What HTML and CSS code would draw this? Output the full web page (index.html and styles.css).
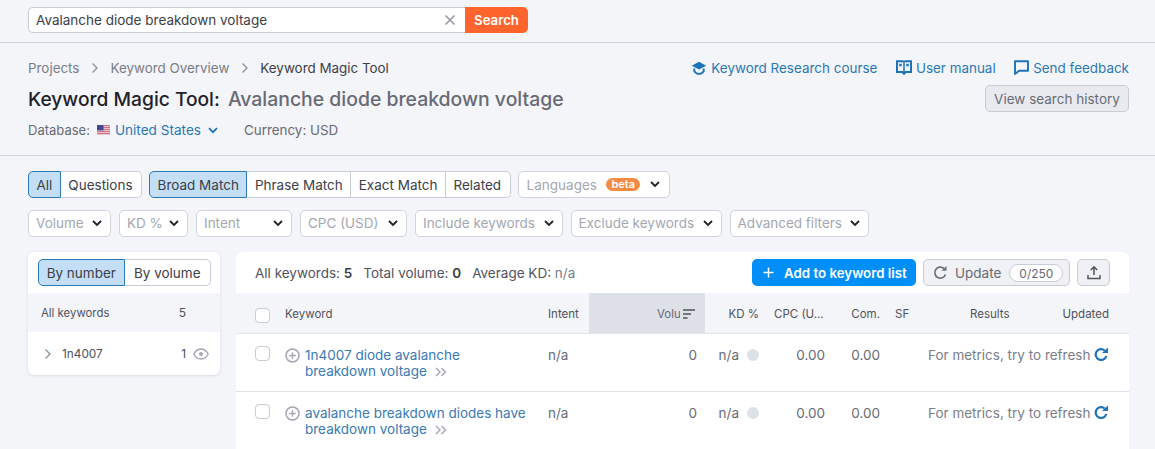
FILE: index.html
```html
<!DOCTYPE html>
<html lang="en">
<head>
<meta charset="UTF-8">
<meta name="viewport" content="width=device-width, initial-scale=1.0">
<title>Keyword Magic Tool</title>
<link rel="stylesheet" href="styles.css">
</head>
<body>

<div class="search-bar">
  <div class="search-input">
    <span class="search-text">Avalanche diode breakdown voltage</span>
    <svg class="clear-icon" width="12" height="12" viewBox="0 0 12 12"><path d="M1.5 1.5l9 9M10.5 1.5l-9 9" stroke="#9a9ca6" stroke-width="1.7" fill="none"/></svg>
  </div>
  <button class="search-button">Search</button>
</div>

<div class="page-head">
  <div class="head-left">
    <div class="breadcrumbs">
      <span>Projects</span>
      <svg class="crumb-sep" width="8" height="12" viewBox="0 0 8 12"><path d="M1.500 1.500L6 6l-4.500 4.500" stroke="#8b8e99" stroke-width="1.300" fill="none"/></svg>
      <span>Keyword Overview</span>
      <svg class="crumb-sep" width="8" height="12" viewBox="0 0 8 12"><path d="M1.500 1.500L6 6l-4.500 4.500" stroke="#8b8e99" stroke-width="1.300" fill="none"/></svg>
      <span class="crumb-current">Keyword Magic Tool</span>
    </div>
    <h1><span class="title-tool">Keyword Magic Tool:</span> <span class="title-query">Avalanche diode breakdown voltage</span></h1>
    <div class="db-line">
      <span>Database:</span>
      <svg class="flag" width="13" height="10" viewBox="0 0 13 10">
        <rect width="13" height="10" fill="#f3f3f6"/>
        <path d="M0 .7h13M0 2.700h13M0 4.700h13M0 6.700h13M0 8.700h13" stroke="#c8485a" stroke-width="1.100"/>
        <rect width="6.500" height="5.400" fill="#3f4a94"/>
      </svg>
      <a class="db-link" href="#">United States</a>
      <svg class="db-chevron" width="10" height="7" viewBox="0 0 10 7"><path d="M1 1.200l4 4 4-4" stroke="#1d72b8" stroke-width="1.700" fill="none"/></svg>
      <span class="currency">Currency: USD</span>
    </div>
  </div>
  <div class="head-right">
    <div class="head-links">
      <a href="#">
        <svg width="16" height="14" viewBox="0 0 16 14"><path d="M8 .8L.8 4.700 8 8.600l7.200-3.900z" fill="#1d72b8"/><path d="M3.300 7.500v2.700C4.500 12 6.200 12.900 8 12.900s3.500-.9 4.700-2.700V7.500" fill="none" stroke="#1d72b8" stroke-width="1.900"/></svg>
        Keyword Research course</a>
      <a href="#">
        <svg width="16" height="15" viewBox="0 0 16 15"><path d="M1 1.200h5.500c.8 0 1.500.4 1.500 1.200 0-.8.700-1.200 1.500-1.200H15v10.800H9.500L8 13.800 6.500 12H1z" fill="none" stroke="#1d72b8" stroke-width="2"/><path d="M8 2.500V13" stroke="#1d72b8" stroke-width="1.500"/><rect x="3.200" y="3.800" width="2.500" height="2.500" fill="#1d72b8"/><rect x="10.300" y="3.800" width="2.500" height="2.500" fill="#1d72b8"/></svg>
        User manual</a>
      <a href="#">
        <svg width="15" height="15" viewBox="0 0 15 15"><path d="M1 1.200h13v9.600H5L1 14z" fill="none" stroke="#1d72b8" stroke-width="1.900" stroke-linejoin="round"/></svg>
        Send feedback</a>
    </div>
    <button class="history-button">View search history</button>
  </div>
</div>

<div class="filters">
  <div class="filter-row">
    <div class="btn-group">
      <button class="active">All</button>
      <button>Questions</button>
    </div>
    <div class="btn-group">
      <button class="active">Broad Match</button>
      <button>Phrase Match</button>
      <button>Exact Match</button>
      <button>Related</button>
    </div>
    <button class="select select-lang">Languages <span class="beta">beta</span>
      <svg class="chevron" width="10" height="7" viewBox="0 0 10 7"><path d="M1 1l4 4 4-4" stroke="#1f2229" stroke-width="1.800" fill="none"/></svg>
    </button>
  </div>
  <div class="filter-grid">
    <button class="select">Volume <svg class="chevron" width="10" height="7" viewBox="0 0 10 7"><path d="M1 1l4 4 4-4" stroke="#1f2229" stroke-width="1.800" fill="none"/></svg></button>
    <button class="select">KD % <svg class="chevron" width="10" height="7" viewBox="0 0 10 7"><path d="M1 1l4 4 4-4" stroke="#1f2229" stroke-width="1.800" fill="none"/></svg></button>
    <button class="select">Intent <svg class="chevron" width="10" height="7" viewBox="0 0 10 7"><path d="M1 1l4 4 4-4" stroke="#1f2229" stroke-width="1.800" fill="none"/></svg></button>
    <button class="select">CPC (USD) <svg class="chevron" width="10" height="7" viewBox="0 0 10 7"><path d="M1 1l4 4 4-4" stroke="#1f2229" stroke-width="1.800" fill="none"/></svg></button>
    <button class="select">Include keywords <svg class="chevron" width="10" height="7" viewBox="0 0 10 7"><path d="M1 1l4 4 4-4" stroke="#1f2229" stroke-width="1.800" fill="none"/></svg></button>
    <button class="select">Exclude keywords <svg class="chevron" width="10" height="7" viewBox="0 0 10 7"><path d="M1 1l4 4 4-4" stroke="#1f2229" stroke-width="1.800" fill="none"/></svg></button>
    <button class="select">Advanced filters <svg class="chevron" width="10" height="7" viewBox="0 0 10 7"><path d="M1 1l4 4 4-4" stroke="#1f2229" stroke-width="1.800" fill="none"/></svg></button>
  </div>
</div>

<div class="content">
  <div class="side-card">
    <div class="side-toggle">
      <div class="btn-group">
        <button class="active">By number</button>
        <button>By volume</button>
      </div>
    </div>
    <div class="side-all"><span>All keywords</span><span class="side-count">5</span></div>
    <div class="side-item">
      <svg width="8" height="12" viewBox="0 0 8 12"><path d="M1.500 1.500L6 6l-4.500 4.500" stroke="#8b8e99" stroke-width="1.300" fill="none"/></svg>
      <span class="side-name">1n4007</span>
      <span>1</span>
      <svg class="eye" width="16" height="12" viewBox="0 0 16 12"><path d="M.8 6C2.500 2.800 5 1 8 1s5.500 1.800 7.200 5C13.500 9.200 11 11 8 11S2.500 9.200.8 6z" fill="none" stroke="#a4a7b2" stroke-width="1.400"/><circle cx="8" cy="6" r="2" fill="#a4a7b2"/></svg>
    </div>
  </div>

  <div class="table-card">
    <div class="table-toolbar">
      <div class="totals">
        <span>All keywords: <b>5</b></span>
        <span>Total volume: <b>0</b></span>
        <span>Average KD: <i>n/a</i></span>
      </div>
      <button class="add-button"><svg width="11" height="11" viewBox="0 0 11 11"><path d="M5.500 .5v10M.5 5.500h10" stroke="#fff" stroke-width="1.500"/></svg> Add to keyword list</button>
      <button class="update-button">
        <svg width="15" height="15" viewBox="0 0 15 15"><path d="M12.500 9.500A5.500 5.500 0 1 1 11 3.500" fill="none" stroke="#6c6e79" stroke-width="1.700"/><path d="M8.500 5.700h5V1z" fill="#6c6e79"/></svg>
        Update <span class="update-count">0/250</span>
      </button>
      <button class="export-button"><svg width="14" height="15" viewBox="0 0 14 15"><path d="M7 10V2M3.800 5L7 1.800 10.200 5M1 10v3.500h12V10" fill="none" stroke="#50525c" stroke-width="1.500"/></svg></button>
    </div>

    <div class="row head-row">
      <div class="cell-check"><span class="checkbox"></span></div>
      <div>Keyword</div>
      <div class="cell-intent">Intent</div>
      <div class="cell-volume sorted">
        <span class="volume-label">Volu</span>
        <svg width="12" height="10" viewBox="0 0 12 10"><path d="M0 1h12M0 5h8M0 9h4.500" stroke="#50525c" stroke-width="1.500"/></svg>
      </div>
      <div class="cell-kd">KD %</div>
      <div class="cell-num">CPC (U...</div>
      <div class="cell-com">Com.</div>
      <div class="cell-sf">SF</div>
      <div class="cell-end"><span class="results-label">Results</span><span>Updated</span></div>
    </div>

    <div class="row kw-row">
      <div class="cell-check"><span class="checkbox"></span></div>
      <div class="kw-cell">
        <svg class="plus-icon" width="15" height="15" viewBox="0 0 15 15"><circle cx="7.500" cy="7.500" r="6.500" fill="none" stroke="#a4a7b2" stroke-width="1.500"/><path d="M7.500 4.200v6.600M4.200 7.500h6.600" stroke="#a4a7b2" stroke-width="1.400"/></svg>
        <a href="#">1n4007 diode avalanche<br>breakdown voltage
          <svg class="more-icon" width="12" height="10" viewBox="0 0 12 10"><path d="M1 1l4 4-4 4M6.500 1l4 4-4 4" stroke="#a4a7b2" stroke-width="1.400" fill="none"/></svg></a>
      </div>
      <div class="cell-intent">n/a</div>
      <div class="cell-volume">0</div>
      <div class="cell-kd"><span>n/a</span><span class="kd-dot"></span></div>
      <div class="cell-num">0.00</div>
      <div class="cell-com">0.00</div>
      <div class="cell-sf"></div>
      <div class="cell-refresh">For metrics, try to refresh
        <svg width="14" height="14" viewBox="0 0 14 14"><path d="M12.300 9A5.400 5.400 0 1 1 10.700 3.500" fill="none" stroke="#1d72b8" stroke-width="2.200"/><path d="M8 6h6V.5z" fill="#1d72b8"/></svg>
      </div>
    </div>

    <div class="row kw-row">
      <div class="cell-check"><span class="checkbox"></span></div>
      <div class="kw-cell">
        <svg class="plus-icon" width="15" height="15" viewBox="0 0 15 15"><circle cx="7.500" cy="7.500" r="6.500" fill="none" stroke="#a4a7b2" stroke-width="1.500"/><path d="M7.500 4.200v6.600M4.200 7.500h6.600" stroke="#a4a7b2" stroke-width="1.400"/></svg>
        <a href="#">avalanche breakdown diodes have<br>breakdown voltage
          <svg class="more-icon" width="12" height="10" viewBox="0 0 12 10"><path d="M1 1l4 4-4 4M6.500 1l4 4-4 4" stroke="#a4a7b2" stroke-width="1.400" fill="none"/></svg></a>
      </div>
      <div class="cell-intent">n/a</div>
      <div class="cell-volume">0</div>
      <div class="cell-kd"><span>n/a</span><span class="kd-dot"></span></div>
      <div class="cell-num">0.00</div>
      <div class="cell-com">0.00</div>
      <div class="cell-sf"></div>
      <div class="cell-refresh">For metrics, try to refresh
        <svg width="14" height="14" viewBox="0 0 14 14"><path d="M12.300 9A5.400 5.400 0 1 1 10.700 3.500" fill="none" stroke="#1d72b8" stroke-width="2.200"/><path d="M8 6h6V.5z" fill="#1d72b8"/></svg>
      </div>
    </div>
  </div>
</div>

</body>
</html>
```

FILE: styles.css
```css
html {
  height: 449px;
  overflow: hidden;
}

body {
  font-family: Inter, "Liberation Sans", sans-serif;
  font-size: 14px;
  color: #50525c;
  background-color: #f4f5f9;
  margin: 0;
  height: 449px;
  overflow: hidden;
}

button {
  font-family: inherit;
  font-size: 14px;
  cursor: pointer;
}

a {
  text-decoration: none;
  color: #2a78b4;
}

/* Top search bar */
.search-bar {
  display: flex;
  height: 43px;
  padding: 7px 28px 0;
  box-sizing: border-box;
  border-bottom: 1px solid #d1d4db;
}

.search-input {
  width: 437px;
  height: 26px;
  box-sizing: border-box;
  display: flex;
  align-items: center;
  justify-content: space-between;
  padding: 0 9px 0 7px;
  background-color: #fff;
  border: 1px solid #c9ccd5;
  border-right: 0;
  border-radius: 5px 0 0 5px;
  font-size: 13.500px;
  color: #3c3e48;
}

.search-button {
  width: 63px;
  height: 26px;
  padding: 0;
  border: 0;
  border-radius: 0 5px 5px 0;
  background-color: #ff642d;
  color: #fff;
  font-weight: 600;
  font-size: 13.200px;
}

/* Page heading */
.page-head {
  display: flex;
  justify-content: space-between;
  height: 113px;
  padding: 14px 26px 0 28px;
  box-sizing: border-box;
  border-bottom: 1px solid #d1d4db;
}

.breadcrumbs {
  display: flex;
  align-items: center;
  gap: 11.500px;
  height: 21px;
  font-size: 13.400px;
  color: #7b7d88;
}

.crumb-current {
  color: #3c3e48;
}

h1 {
  margin: 9px 0 0;
  height: 24px;
  line-height: 24px;
  font-size: 19.200px;
  font-weight: 500;
  white-space: nowrap;
}

.title-tool {
  color: #1f2229;
  margin-right: 3px;
}

.title-query {
  font-size: 19.400px;
  color: #686a75;
}

.db-line {
  display: flex;
  align-items: center;
  margin-top: 9px;
  height: 20px;
  font-size: 13px;
  color: #686a75;
}

.flag {
  margin: 0 5px 0 7px;
}

.db-link {
  font-size: 13.600px;
}

.db-chevron {
  margin-left: 7px;
}

.currency {
  margin-left: 26px;
  font-size: 13.400px;
}

.head-right {
  display: flex;
  flex-direction: column;
  align-items: flex-end;
}

.head-links {
  display: flex;
  gap: 18.500px;
  height: 21px;
  font-size: 13.450px;
}

.head-links a {
  display: flex;
  align-items: center;
  gap: 4px;
}

.history-button {
  margin-top: 7px;
  height: 27px;
  width: 144px;
  padding: 0;
  background-color: #e9eaef;
  border: 1px solid #c9ccd5;
  border-radius: 5px;
  color: #686a75;
  font-size: 13.500px;
}

/* Filter rows */
.filters {
  padding: 15px 28px 0;
}

.filter-row {
  display: flex;
  gap: 7px;
  height: 27px;
  margin-bottom: 12px;
}

.filter-grid {
  display: grid;
  grid-template-columns: 83px 69px 96px 107px 147.500px 151px 139px;
  gap: 8px;
  height: 27px;
  margin-bottom: 12px;
}

.filter-grid .select {
  padding-bottom: 1px;
}

.btn-group {
  display: flex;
}

.btn-group button {
  height: 27px;
  padding: 0 7.500px;
  background-color: #fff;
  border: 1px solid #c9ccd5;
  border-left: 0;
  color: #3c3e48;
  font-size: 13.500px;
  white-space: nowrap;
}

.btn-group button:first-child {
  border-left: 1px solid #c9ccd5;
  border-radius: 5px 0 0 5px;
}

.btn-group button:last-child {
  padding-right: 8.500px;
  border-radius: 0 5px 5px 0;
}

.btn-group button.active {
  background-color: #c3def5;
  border: 1px solid #2a78b4;
  color: #3c3e48;
}

.select {
  display: flex;
  align-items: center;
  justify-content: space-between;
  height: 27px;
  padding: 0 8px 0 7px;
  background-color: #fff;
  border: 1px solid #d1d4db;
  border-radius: 5px;
  color: #a4a7b2;
  font-size: 13.500px;
  white-space: nowrap;
}

.select-lang {
  width: 152px;
  padding: 0 9px 0 8px;
}

.beta {
  padding: 0 5px;
  height: 13px;
  line-height: 12px;
  background-color: #f58a45;
  border-radius: 7px;
  color: #fff;
  font-size: 11px;
  font-weight: 600;
}

/* Cards */
.content {
  display: flex;
  align-items: flex-start;
  gap: 16px;
  padding: 3px 26px 0 28px;
}

.side-card {
  width: 192px;
  flex-shrink: 0;
  background-color: #fff;
  border-radius: 6px;
  box-shadow: 0 1px 3px rgba(40, 44, 70, 0.12);
  overflow: hidden;
}

.side-toggle {
  height: 41px;
  padding: 7px 9px 0 10px;
  box-sizing: border-box;
}

.side-toggle .btn-group button {
  flex: 0 0 86.500px;
  padding: 0;
}

.side-all {
  display: flex;
  justify-content: space-between;
  align-items: center;
  height: 39px;
  padding: 0 34px 0 13px;
  background-color: #f4f5f9;
  font-size: 11.400px;
  color: #50525c;
}

.side-count {
  font-size: 12px;
}

.side-item {
  display: flex;
  align-items: center;
  height: 43px;
  padding: 0 11px 0 16px;
  font-size: 11.800px;
  color: #50525c;
}

.side-name {
  flex: 1;
  margin-left: 10px;
}

.eye {
  margin-left: 7px;
}

.table-card {
  flex: 1;
  background-color: #fff;
  border-radius: 6px 6px 0 0;
  height: 197px;
}

.table-toolbar {
  display: flex;
  align-items: center;
  height: 41px;
  padding: 0 19px;
  box-sizing: border-box;
}

.totals {
  flex: 1;
  display: flex;
  gap: 11px;
  font-size: 13.500px;
  color: #50525c;
}

.totals b {
  color: #3c3e48;
  font-weight: 600;
}

.totals i {
  font-style: normal;
  color: #7b7d88;
}

.add-button {
  display: flex;
  align-items: center;
  gap: 10px;
  width: 164px;
  height: 27px;
  padding: 0 0 0 11px;
  border: 0;
  border-radius: 5px;
  background-color: #008ff8;
  color: #fff;
  font-weight: 600;
  font-size: 13.300px;
  white-space: nowrap;
}

.update-button {
  display: flex;
  align-items: center;
  gap: 7px;
  width: 147px;
  height: 27px;
  margin-left: 7px;
  padding: 0 0 0 9px;
  background-color: #f0f1f4;
  border: 1px solid #c9ccd5;
  border-radius: 5px;
  color: #686a75;
  font-size: 13.500px;
}

.update-count {
  margin-left: 1px;
  padding: 0 9px;
  height: 18px;
  line-height: 17px;
  box-sizing: border-box;
  background-color: #fff;
  border: 1px solid #c9ccd5;
  border-radius: 9px;
  font-size: 12px;
}

.export-button {
  display: flex;
  align-items: center;
  justify-content: center;
  width: 33px;
  height: 27px;
  margin-left: 7px;
  padding: 0;
  background-color: #f0f1f4;
  border: 1px solid #c9ccd5;
  border-radius: 5px;
}

/* Table rows share one grid */
.row {
  display: grid;
  grid-template-columns: 49px 255px 49px 116px 62px 58px 63px 32px 209px;
  box-sizing: border-box;
  font-size: 13.500px;
}

.head-row {
  height: 41px;
  background-color: #f4f5f9;
  border-bottom: 1px solid #e6e7ec;
  font-size: 11.500px;
  color: #50525c;
}

.head-row > div {
  display: flex;
  align-items: center;
  padding-top: 1px;
}

.kw-row {
  height: 58px;
  padding-top: 13px;
  border-bottom: 1px solid #e0e1e7;
  color: #686a75;
  line-height: 16px;
}

.kw-row:last-child {
  height: 57px;
  border-bottom: 0;
}

.cell-check {
  padding-left: 19px;
}

.checkbox {
  display: block;
  width: 15px;
  height: 15px;
  box-sizing: border-box;
  background-color: #fff;
  border: 1px solid #c9ccd5;
  border-radius: 4px;
}

.head-row .checkbox {
  margin-top: 3px;
}

.kw-row .checkbox {
  margin-top: -1px;
}

.kw-cell {
  display: flex;
  gap: 5px;
}

.kw-cell a {
  color: #3a79b4;
}

.plus-icon {
  flex-shrink: 0;
  margin-top: 1px;
}

.more-icon {
  margin-left: 4px;
  vertical-align: -1px;
}

.cell-intent {
  padding-left: 8px;
}

.cell-volume {
  padding-right: 8px;
  text-align: right;
  justify-content: flex-end;
}

.head-row .cell-volume {
  gap: 3px;
  padding-right: 10px;
}

.sorted {
  background-color: #dfe1e9;
}

.volume-label {
  width: 23px;
  overflow: hidden;
  color: #686a75;
}

.cell-kd {
  display: flex;
  justify-content: flex-end;
  gap: 8px;
  padding-right: 8px;
}

.kd-dot {
  width: 12px;
  height: 12px;
  margin-top: 2px;
  border-radius: 50%;
  background-color: #dfe1e9;
}

.cell-num {
  padding-left: 7px;
  white-space: nowrap;
}

.kw-row .cell-num {
  padding-right: 0;
  text-align: right;
}

.cell-com {
  justify-content: flex-end;
  text-align: right;
  padding-right: 8px;
}

.cell-sf {
  padding-left: 7px;
}

.cell-end {
  justify-content: space-between;
  padding-right: 20px;
  padding-left: 50px;
}

.cell-refresh {
  display: flex;
  gap: 4px;
  padding-left: 8px;
  white-space: nowrap;
  color: #7b7d88;
}
```
